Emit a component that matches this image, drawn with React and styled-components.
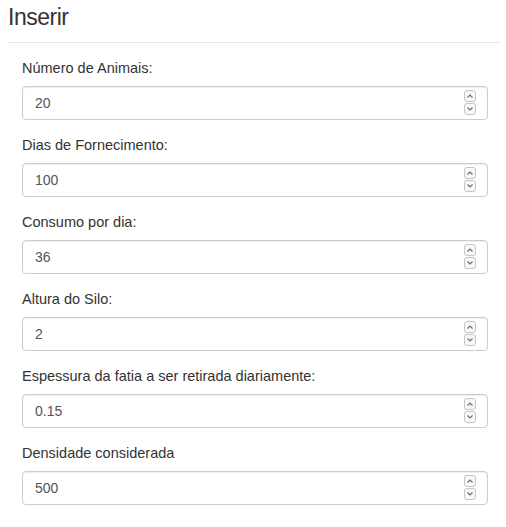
import React from "react";
import styled, { createGlobalStyle } from "styled-components";

const GlobalStyle = createGlobalStyle`
	body {
		margin: 0;
		background: #fff;
		font-family: "Liberation Sans", Arial, sans-serif;
		font-size: 14px;
		line-height: 1.42857;
		color: #333;
	}
	* {
		box-sizing: border-box;
	}
`;

const Page = styled.div`
	padding: 3px 5px 0 8px;
`;

const Title = styled.h3`
	margin: 0;
	height: 26px;
	font-size: 23px;
	font-weight: 500;
	line-height: 28px;
	letter-spacing: -0.5px;
	color: #333;
`;

const Divider = styled.hr`
	margin: 13px 0 15px;
	border: 0;
	border-top: 1px solid #e5e5e5;
`;

const Form = styled.form`
	padding: 0 13px 0 14px;
`;

const Group = styled.div`
	margin-bottom: 15px;
`;

const Label = styled.label`
	display: block;
	margin-bottom: 8px;
	font-size: 14.5px;
	line-height: 20px;
	font-weight: normal;
	color: #333;
`;

const Field = styled.div`
	position: relative;
`;

const Input = styled.input`
	display: block;
	width: 100%;
	height: 34px;
	padding: 6px 30px 6px 12px;
	font-family: "Liberation Sans", Arial, sans-serif;
	font-size: 14px;
	color: #555;
	background: #fff;
	border: 1px solid #ccc;
	border-radius: 4px;
	box-shadow: inset 0 1px 1px rgba(0, 0, 0, 0.075);
	outline: none;
	-moz-appearance: textfield;

	&::-webkit-inner-spin-button,
	&::-webkit-outer-spin-button {
		-webkit-appearance: none;
		margin: 0;
	}
`;

const Spinner = styled.div`
	position: absolute;
	top: 4px;
	right: 12px;
	display: flex;
	flex-direction: column;
	gap: 1px;
`;

const SpinButton = styled.span`
	display: flex;
	align-items: center;
	justify-content: center;
	width: 12px;
	height: 12px;
	border: 1px solid #c4c4c4;
	border-radius: 3px;
	background: #f8f8f8;
`;

function Chevron({ down }) {
	return (
		<svg width="8" height="6" viewBox="0 0 8 6">
			<path
				d={down ? "M1.5 1.5 L4 4 L6.5 1.5" : "M1.5 4.5 L4 2 L6.5 4.5"}
				fill="none"
				stroke="#6f6f6f"
				strokeWidth="1.2"
			/>
		</svg>
	);
}

const fields = [
	{ label: "Número de Animais:", value: "20" },
	{ label: "Dias de Fornecimento:", value: "100" },
	{ label: "Consumo por dia:", value: "36" },
	{ label: "Altura do Silo:", value: "2" },
	{ label: "Espessura da fatia a ser retirada diariamente:", value: "0.15" },
	{ label: "Densidade considerada", value: "500" },
];

export default function App() {
	return (
		<Page>
			<GlobalStyle />
			<Title>Inserir</Title>
			<Divider />
			<Form>
				{fields.map((f, i) => (
					<Group key={i}>
						<Label htmlFor={"f" + i}>{f.label}</Label>
						<Field>
							<Input id={"f" + i} type="number" defaultValue={f.value} />
							<Spinner>
								<SpinButton>
									<Chevron />
								</SpinButton>
								<SpinButton>
									<Chevron down />
								</SpinButton>
							</Spinner>
						</Field>
					</Group>
				))}
			</Form>
		</Page>
	);
}
